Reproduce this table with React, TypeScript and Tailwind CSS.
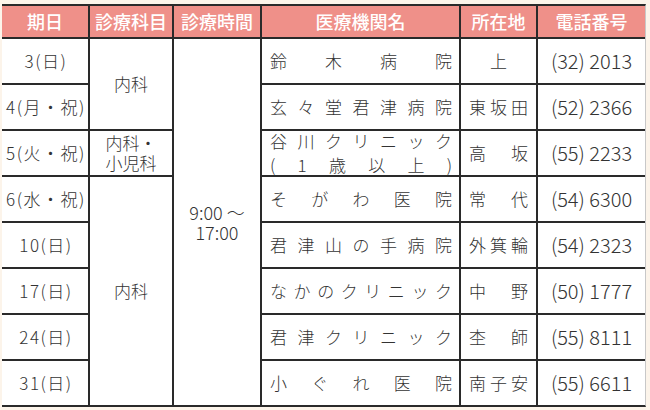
import React from "react";

const font = { fontFamily: '"Noto Sans CJK JP", "Noto Sans", sans-serif' };

type Row = {
  date: string;
  name: string[];
  place: string;
  phone: string;
};

const rows: Row[] = [
  { date: "3(日)", name: ["鈴木病院"], place: "上", phone: "(32) 2013" },
  { date: "4(月・祝)", name: ["玄々堂君津病院"], place: "東坂田", phone: "(52) 2366" },
  { date: "5(火・祝)", name: ["谷川クリニック", "(1歳以上)"], place: "高坂", phone: "(55) 2233" },
  { date: "6(水・祝)", name: ["そがわ医院"], place: "常代", phone: "(54) 6300" },
  { date: "10(日)", name: ["君津山の手病院"], place: "外箕輪", phone: "(54) 2323" },
  { date: "17(日)", name: ["なかのクリニック"], place: "中野", phone: "(50) 1777" },
  { date: "24(日)", name: ["君津クリニック"], place: "杢師", phone: "(55) 8111" },
  { date: "31(日)", name: ["小ぐれ医院"], place: "南子安", phone: "(55) 6611" },
];

const rowStart = [
  "row-start-2",
  "row-start-3",
  "row-start-4",
  "row-start-5",
  "row-start-6",
  "row-start-7",
  "row-start-8",
  "row-start-9",
];

function Spread({ text }: { text: string }) {
  return (
    <div className="flex w-full justify-between">
      {Array.from(text).map((ch, i) => (
        <span key={i}>{ch}</span>
      ))}
    </div>
  );
}

const headers = ["期日", "診療科目", "診療時間", "医療機関名", "所在地", "電話番号"];

export default function App() {
  return (
    <div
      className="h-[410px] w-[650px] bg-[#fcf4ea] pl-[2px] pt-[4px] text-[#333]"
      style={font}
    >
      <div className="grid w-[644px] grid-cols-[86px_82px_86px_197px_75px_107px] grid-rows-[31px_repeat(8,44px)] gap-[2px] border-t-2 border-b-2 border-r border-t-[#2a2a2a] border-b-[#2a2a2a] border-r-[#c8c8c8] bg-[#2a2a2a]">
        {headers.map((h) => (
          <div
            key={h}
            className="flex items-center justify-center bg-[#ef9089] text-[18px] font-medium text-white"
          >
            {h}
          </div>
        ))}

        {rows.map((r, i) => (
          <React.Fragment key={r.date}>
            <div
              className={`col-start-1 ${rowStart[i]} flex items-center justify-center whitespace-nowrap bg-white pl-[2px] text-[17px] font-light tracking-[1.5px]`}
            >
              {r.date}
            </div>
            <div
              className={`col-start-4 ${rowStart[i]} flex flex-col justify-center bg-white pl-2 pr-[7px] text-[17px] font-light leading-6`}
            >
              {r.name.map((n) => (
                <Spread key={n} text={n} />
              ))}
            </div>
            <div
              className={`col-start-5 ${rowStart[i]} flex items-center justify-center bg-white px-2 text-[17px] font-light`}
            >
              {r.place.length > 1 ? <Spread text={r.place} /> : r.place}
            </div>
            <div
              className={`col-start-6 ${rowStart[i]} flex items-center justify-center bg-white text-[20px] font-light`}
            >
              {r.phone}
            </div>
          </React.Fragment>
        ))}

        <div className="col-start-2 row-span-2 row-start-2 flex items-center justify-center bg-white text-[17px] font-light">
          内科
        </div>
        <div className="col-start-2 row-start-4 flex items-center justify-center bg-white text-center text-[17px] font-light leading-5">
          内科・
          <br />
          小児科
        </div>
        <div className="col-start-2 row-span-5 row-start-5 flex items-center justify-center bg-white text-[17px] font-light">
          内科
        </div>
        <div className="col-start-3 row-span-8 row-start-2 flex items-center justify-center bg-white text-center text-[18px] font-light leading-5">
          9:00 ～
          <br />
          17:00
        </div>
      </div>
    </div>
  );
}
